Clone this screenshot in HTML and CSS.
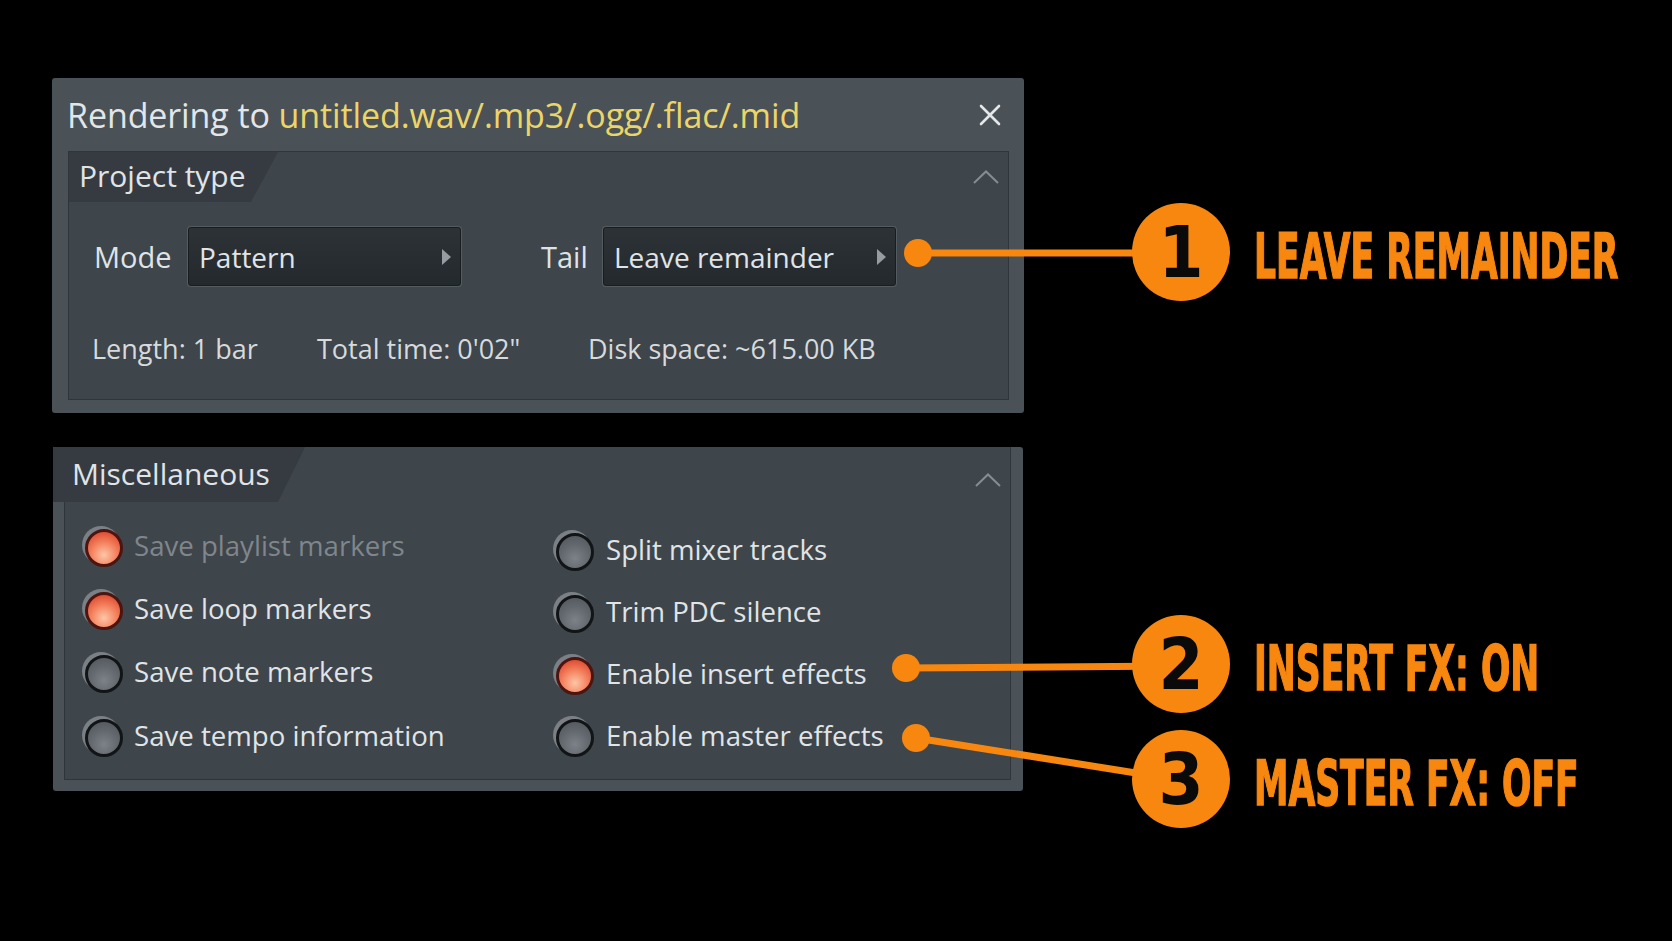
FILE: index.html
```html
<!DOCTYPE html>
<html lang="en">
<head>
    <meta charset="UTF-8">
    <meta name="viewport" content="width=device-width, initial-scale=1.0">
    <title>Render Settings</title>
    <link rel="stylesheet" href="styles.css">
</head>
<body>
    <div class="stage">
        <div class="panels">
            <div class="panel render">
                <div class="titlebar">
                    <h1>Rendering to <span class="file">untitled.wav/.mp3/.ogg/.flac/.mid</span></h1>
                    <svg class="close" width="22" height="22" viewBox="0 0 22 22">
                        <path d="M2 2 L20 20 M20 2 L2 20" stroke="#e4e7ea" stroke-width="2.6" stroke-linecap="round"/>
                    </svg>
                </div>
                <div class="section project">
                    <div class="section-head">
                        <div class="tab">Project type</div>
                        <svg class="chevron" width="26" height="14" viewBox="0 0 26 14">
                            <polyline points="1,13 13,1.5 25,13" fill="none" stroke="#868c92" stroke-width="2"/>
                        </svg>
                    </div>
                    <div class="controls">
                        <span class="field-label mode-label">Mode</span>
                        <div class="select mode"><span>Pattern</span><i class="arrow"></i></div>
                        <span class="field-label tail-label">Tail</span>
                        <div class="select tail"><span>Leave remainder</span><i class="arrow"></i></div>
                    </div>
                    <div class="info">
                        <span>Length: 1 bar</span>
                        <span>Total time: 0'02"</span>
                        <span>Disk space: ~615.00 KB</span>
                    </div>
                </div>
            </div>

            <div class="panel misc">
                <div class="section">
                    <div class="section-head">
                        <div class="tab">Miscellaneous</div>
                        <svg class="chevron" width="26" height="14" viewBox="0 0 26 14">
                            <polyline points="1,13 13,1.5 25,13" fill="none" stroke="#868c92" stroke-width="2"/>
                        </svg>
                    </div>
                    <div class="options">
                        <div class="col left">
                            <div class="option disabled"><span class="radio on"></span>Save playlist markers</div>
                            <div class="option"><span class="radio on"></span>Save loop markers</div>
                            <div class="option"><span class="radio"></span>Save note markers</div>
                            <div class="option"><span class="radio"></span>Save tempo information</div>
                        </div>
                        <div class="col right">
                            <div class="option"><span class="radio"></span>Split mixer tracks</div>
                            <div class="option"><span class="radio"></span>Trim PDC silence</div>
                            <div class="option"><span class="radio on"></span>Enable insert effects</div>
                            <div class="option"><span class="radio"></span>Enable master effects</div>
                        </div>
                    </div>
                </div>
            </div>
        </div>

        <!-- callout leader lines drawn over the panels -->
        <svg class="leaders" width="1672" height="941" viewBox="0 0 1672 941">
            <g stroke="#f7870f" stroke-width="7" fill="#f7870f">
                <line x1="918" y1="253" x2="1181" y2="253"/>
                <line x1="906" y1="668" x2="1180" y2="666"/>
                <line x1="916" y1="738" x2="1180" y2="780"/>
                <circle cx="918" cy="253" r="14" stroke="none"/>
                <circle cx="906" cy="668" r="14" stroke="none"/>
                <circle cx="916" cy="738" r="14" stroke="none"/>
            </g>
        </svg>

        <div class="callout c1"><span class="badge">1</span><span class="label">LEAVE REMAINDER</span></div>
        <div class="callout c2"><span class="badge">2</span><span class="label">INSERT FX: ON</span></div>
        <div class="callout c3"><span class="badge">3</span><span class="label">MASTER FX: OFF</span></div>
    </div>
</body>
</html>
```

FILE: styles.css
```css
* {
    margin: 0;
    padding: 0;
    box-sizing: border-box;
}

body {
    background: #000;
    font-family: 'Open Sans', 'Noto Sans', sans-serif;
    color: #dde1e4;
    overflow: hidden;
}

.stage {
    position: relative;
    width: 1672px;
    height: 941px;
    overflow: hidden;
}

.panels {
    padding: 78px 0 0 52px;
}

/* Panels */
.panel {
    background: #4a5157;
    border-radius: 3px;
}

.panel.render {
    width: 972px;
    padding: 0 15px 13px 16px;
}

.panel.misc {
    width: 970px;
    margin: 34px 0 0 1px;
    padding: 0 12px 11px 11px;
}

.titlebar {
    height: 73px;
    display: flex;
    align-items: center;
    justify-content: space-between;
    padding: 0 8px 0 0;
    margin-left: -1px;
}

.titlebar h1 {
    font-size: 34px;
    font-weight: 400;
    color: #e3e6e9;
    letter-spacing: -0.1px;
}

.titlebar .file {
    color: #ecd567;
}

.close {
    display: block;
}

.section {
    background: #3e454b;
    border: 1px solid #2f353a;
}

.project {
    height: 249px;
}

.misc .section {
    height: 333px;
    border-top: none;
}

.section-head {
    display: flex;
    justify-content: space-between;
    align-items: center;
    height: 50px;
    padding-right: 9px;
}

.misc .section-head {
    height: 55px;
    margin-left: -12px;
}

.tab {
    width: 209px;
    height: 100%;
    background: #353b41;
    clip-path: polygon(0 0, 100% 0, calc(100% - 27px) 100%, 0 100%);
    font-size: 30px;
    line-height: 48px;
    padding-left: 10px;
    color: #e0e4e7;
}

.misc .tab {
    width: 252px;
    line-height: 54px;
    padding-left: 19px;
}

.chevron {
    display: block;
}

.misc .chevron {
    margin-top: 10px;
}

/* Mode / Tail row */
.controls {
    display: flex;
    align-items: center;
    margin-top: 25px;
    padding-left: 25px;
    height: 59px;
    font-size: 28px;
}

.field-label {
    font-size: 29px;
    color: #dfe3e6;
}

.mode-label {
    width: 94px;
}

.tail-label {
    width: 62px;
    margin-left: 80px;
}

.select {
    height: 59px;
    display: flex;
    align-items: center;
    justify-content: space-between;
    padding: 0 9px 0 10px;
    background: linear-gradient(#2d3237, #24292d);
    border: 1px solid #1a1d20;
    border-radius: 3px;
    box-shadow: 0 0 0 1px #545b61;
    color: #e0e4e7;
}

.select.mode {
    width: 273px;
}

.select.tail {
    width: 293px;
}

.arrow {
    width: 0;
    height: 0;
    border-left: 9px solid #969ca1;
    border-top: 8px solid transparent;
    border-bottom: 8px solid transparent;
}

.info {
    display: grid;
    grid-template-columns: 225px 271px auto;
    margin-top: 44px;
    padding-left: 23px;
    font-size: 27px;
    color: #d6dadd;
}

/* Radio options */
.options {
    display: flex;
    padding: 11px 0 0 17px;
}

.col {
    display: flex;
    flex-direction: column;
}

.col.left {
    width: 471px;
}

.col.right {
    padding-top: 5px;
}

.option {
    height: 63.3px;
    display: flex;
    align-items: center;
    gap: 14px;
    font-size: 27.6px;
    color: #e0e4e7;
}

.col.right .option {
    height: 62px;
    gap: 15px;
}

.option.disabled {
    color: #80868b;
}

.radio {
    width: 38px;
    height: 38px;
    border-radius: 50%;
    background: #7a8085;
    padding: 3px;
    flex-shrink: 0;
}

.radio::after {
    content: '';
    display: block;
    width: 100%;
    height: 100%;
    border-radius: 50%;
    border: 3px solid #121518;
    background: radial-gradient(circle at 50% 70%, #7c8287 0%, #62686d 50%, #4e5459 100%);
}

.radio.on::after {
    border-color: #4c1510;
    background: radial-gradient(circle at 50% 72%, #fdc6a6 0%, #f4825f 45%, #dc4a30 85%);
}

/* Callouts */
.leaders {
    position: absolute;
    top: 0;
    left: 0;
    pointer-events: none;
}

.callout {
    position: absolute;
    left: 1132px;
    width: 520px;
    display: flex;
    align-items: center;
}

.c1 { top: 203px; }
.c2 { top: 615px; }
.c3 { top: 730px; }

.badge {
    width: 98px;
    height: 98px;
    flex-shrink: 0;
    border-radius: 50%;
    background: #f7870f;
    color: #0a0a0a;
    display: flex;
    align-items: center;
    justify-content: center;
    font-family: 'DejaVu Sans Condensed', 'DejaVu Sans', sans-serif;
    font-weight: 700;
    font-size: 72px;
    line-height: 1;
}

.label {
    margin-left: 24px;
    margin-top: 8px;
    font-family: 'DejaVu Sans Condensed', 'DejaVu Sans', sans-serif;
    font-weight: 700;
    font-size: 63px;
    line-height: 1;
    color: #f7870f;
    -webkit-text-stroke: 1.5px #f7870f;
    transform: scaleX(0.61);
    transform-origin: left center;
    white-space: nowrap;
}
```
